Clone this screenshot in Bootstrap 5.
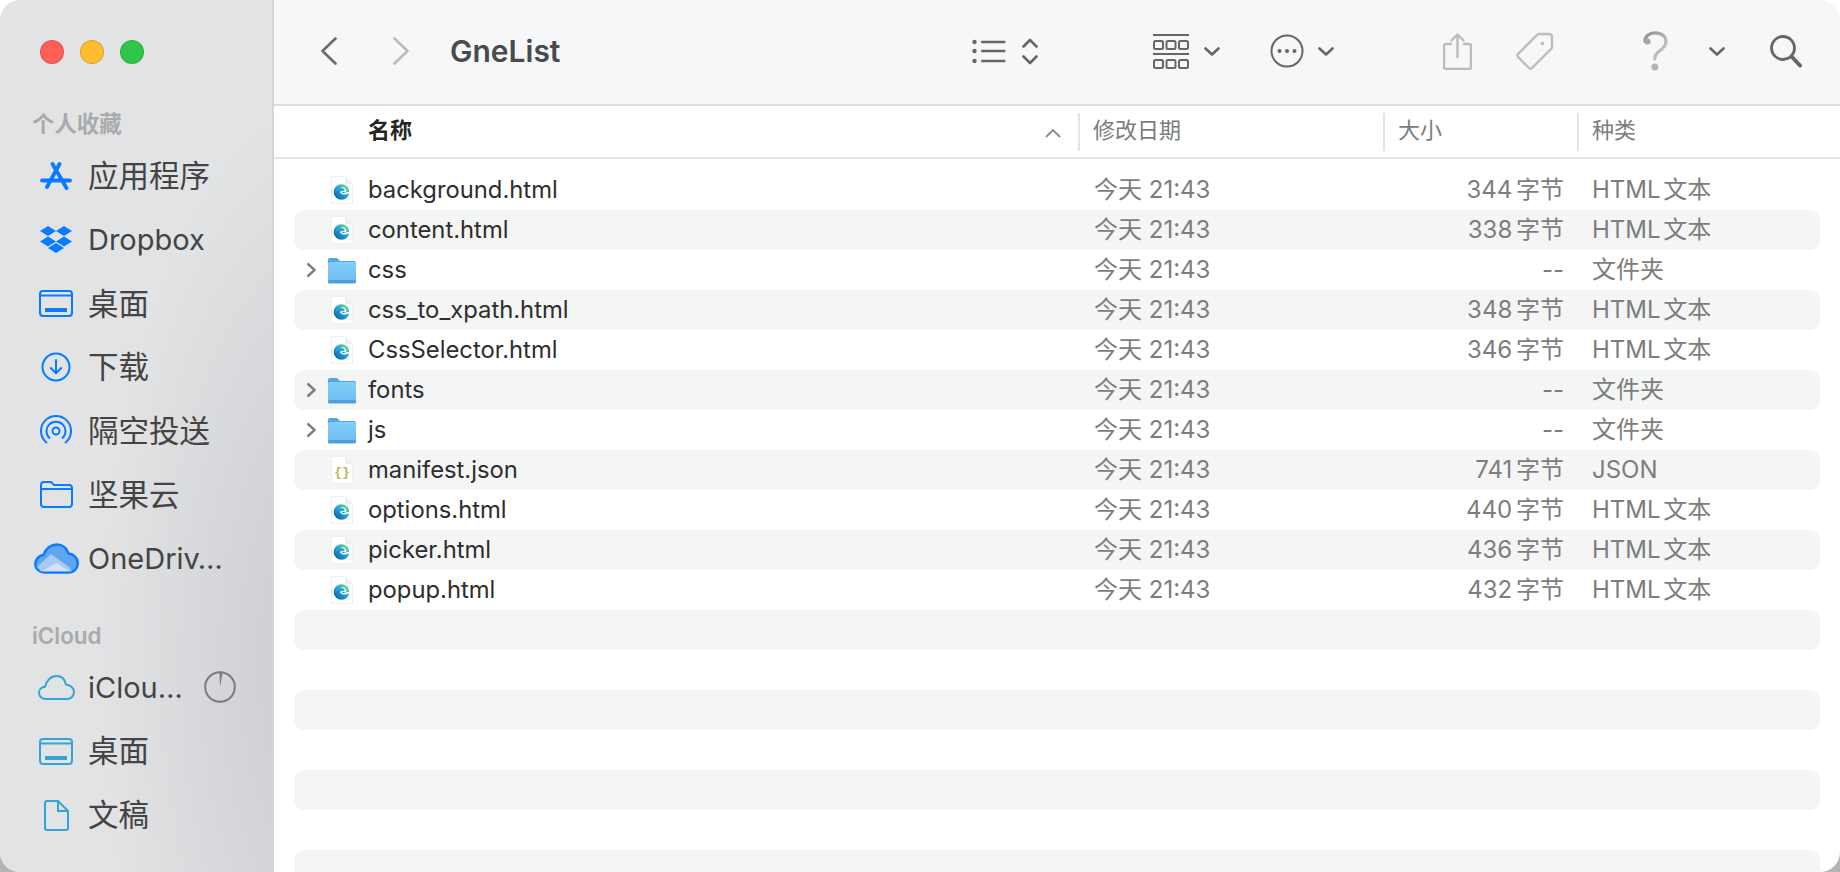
<!DOCTYPE html>
<html lang="zh">
<head>
<meta charset="utf-8">
<title>GneList</title>
<link href="https://cdn.jsdelivr.net/npm/bootstrap@5.3.0/dist/css/bootstrap.min.css" rel="stylesheet">
<style>
html,body{height:100%;overflow:hidden}
body{background:linear-gradient(#fff 0 60px,#b4b4b4 60px);font-family:Inter,"Noto Sans CJK SC",sans-serif}
.win{height:872px;border-radius:20px;overflow:hidden;background:#fff}
.side{width:274px;flex:none;border-right:2px solid #d3d4d6;background:radial-gradient(ellipse 230px 560px at 330px 660px,#c8cacd 0,rgba(200,202,205,.5) 50%,rgba(226,227,229,0) 100%),#e2e3e5}
.lights{padding:40px 0 0 40px;gap:16px}
.light{width:24px;height:24px;border-radius:50%;border:1px solid rgba(0,0,0,.12)}
.l-r{background:#fe5f57}.l-y{background:#febc2e}.l-g{background:#30c748}
.sec{font-size:22.4px;font-weight:600;line-height:28px;color:#a9aaac;padding-left:32px;margin-bottom:6px}
.sec-a{margin-top:46px}.sec-b{margin-top:31px}
.it{height:63.8px;font-size:29px;color:#444;white-space:nowrap}
.cj{font-size:30.5px}
.ic{width:56px;margin:0 4px 0 28px;flex:none;display:flex;justify-content:center}
.tint-a{color:#0a7aff}.tint-b{color:#34a4d6}
.pie{margin-left:21px}
.bar{height:106px;background:#f6f7f9;border-bottom:2px solid #dcdcdc;padding:0 0 2px 47px;color:#666}
.ttl{font-size:30px;font-weight:600;color:#4a4a4a;margin:0 0 0 41px;line-height:1}
.hd{height:53px;border-bottom:2px solid #e4e4e4;font-size:22px;color:#7c7c7c}
.hc{height:38px;border-left:2px solid #e4e4e4;padding-left:13px;line-height:34px}
.hc-n{width:804px;padding-left:94px;border-left:0;color:#262626;font-weight:600;position:relative}
.hc-d{width:305px}.hc-s{width:194px}
.sort{position:absolute;right:17px;top:15px}
.rows{padding:11px 20px 0;overflow:hidden;flex:1}
.rw{height:40px;border-radius:10px;display:grid;grid-template-columns:74px 726px 290px 180px 28px 1fr;align-items:center;font-size:24px;color:#7d7d7d;white-space:nowrap}
.rw:nth-child(even){background:#f4f5f5}
.nm{color:#2e2e2e;font-size:23.800px}
.sz{text-align:right;word-spacing:-3px}
.ty{grid-column:6;word-spacing:-4px}
.lead-ic{display:flex;align-items:center;padding-left:12px;height:40px}
.tw{width:28px;flex:none;display:flex;justify-content:center}
.tri{width:22px;flex:none;display:flex}
.tb-fw{margin-left:56px}
.tb-list{margin-left:412px}
.tb-ud{margin-left:16px}
.tb-grid{margin-left:115px}
.tb-c1{margin-left:15px}
.tb-more{margin-left:50px}
.tb-c2{margin-left:14px}
.tb-share{margin-left:109px}
.tb-tag{margin-left:44px}
.tb-q{margin-left:88px}
.tb-c3{margin-left:41px}
.tb-s{margin-left:45px}
</style>
</head>
<body>
<svg width="0" height="0" class="d-block" aria-hidden="true">
<defs>
<linearGradient id="eg" x1="0" y1="1" x2="1" y2="0"><stop offset="0" stop-color="#0b4f9c"/><stop offset=".5" stop-color="#1f9fd6"/><stop offset=".85" stop-color="#5fd98a"/><stop offset="1" stop-color="#7fe060"/></linearGradient>
<linearGradient id="fg" x1="0" y1="0" x2="0" y2="1"><stop offset="0" stop-color="#84cef8"/><stop offset="1" stop-color="#6abcf1"/></linearGradient>
<linearGradient id="qg" x1="0" y1="0" x2="1" y2="1"><stop offset="0" stop-color="#8f8f8f"/><stop offset="1" stop-color="#cfcfcf"/></linearGradient>
<symbol id="page" viewBox="0 0 22 28"><path d="M.5.5H14L21.5 8V27.5H.5Z" fill="#fff" stroke="#efefef"/><path d="M14 .5V8H21.5Z" fill="#f0f0f0"/></symbol>
<symbol id="edge" viewBox="0 0 22 28"><use href="#page" width="22" height="28"/><circle cx="10.5" cy="16" r="7.800" fill="url(#eg)"/><path d="M5.200 15.500C6.200 11.500 11 10.200 13.400 13.200 14 14 13.800 15 12.800 15.200H9.200C8.600 17.400 11.600 19.400 16 17.900L18.300 17.200 18.500 15.800C18 15.600 14 17 12.400 17 10.600 17 10.400 16.400 11 16H15.200C16 13 13 10.600 10 11.200 7 11.800 5.200 13.400 5.200 15.500Z" fill="#fff"/></symbol>
<symbol id="json" viewBox="0 0 22 28"><use href="#page" width="22" height="28"/><text x="11" y="20" text-anchor="middle" font-family="Liberation Mono,monospace" font-size="13" font-weight="700" fill="#b9b64c">{}</text></symbol>
<symbol id="folder" viewBox="0 0 28 27"><path d="M0 3a2 2 0 0 1 2-2h7l3 3h14a2 2 0 0 1 2 2v5H0Z" fill="#4ea6e8"/><rect y="5" width="28" height="21" rx="2" fill="url(#fg)"/><rect y="23" width="28" height="3.500" rx="1.500" fill="#4f9fdc"/></symbol>
<symbol id="tri" viewBox="0 0 10 16"><path d="M1.500 1.500 8.500 8 1.500 14.500" fill="none" stroke="#7d7d7d" stroke-width="2.400"/></symbol>
<symbol id="chev" viewBox="0 0 16 9"><path d="M1.500 1.500 8 7.500 14.500 1.500" fill="none" stroke="#666" stroke-width="2.600" stroke-linecap="round" stroke-linejoin="round"/></symbol>
<symbol id="desk" viewBox="0 0 34 27"><rect x="1" y="1" width="32" height="25" rx="3" fill="none" stroke="currentColor" stroke-width="2"/><path d="M1 5.500H33" stroke="currentColor" stroke-width="2"/><rect x="6" y="18" width="22" height="4" fill="currentColor"/></symbol>
</defs>
</svg>

<div class="win d-flex">
<aside class="side d-flex flex-column">
  <div class="lights d-flex"><span class="light l-r"></span><span class="light l-y"></span><span class="light l-g"></span></div>
  <div class="sec sec-a">个人收藏</div>
  <div class="it d-flex align-items-center"><span class="ic"><svg width="32" height="28" viewBox="0 0 32 28" fill="none" stroke="#0a7aff" stroke-width="3.800" stroke-linecap="round"><path d="M19.500 2 7 25M12.500 2 26.500 26M2 18.500H30"/></svg></span><span class="cj">应用程序</span></div>
  <div class="it d-flex align-items-center"><span class="ic"><svg width="32" height="27" viewBox="0 0 32 27" fill="#0a7aff"><path d="M8 0l8 5-8 5-8-5zM24 0l8 5-8 5-8-5zM8 10.500l8 5-8 5-8-5zM24 10.500l8 5-8 5-8-5zM16 17l8 5-8 5-8-5z"/></svg></span>Dropbox</div>
  <div class="it d-flex align-items-center"><span class="ic tint-a"><svg width="34" height="27"><use href="#desk"/></svg></span><span class="cj">桌面</span></div>
  <div class="it d-flex align-items-center"><span class="ic"><svg width="30" height="30" viewBox="0 0 30 30" fill="none" stroke="#0a7aff" stroke-width="2"><circle cx="15" cy="15" r="13.500"/><path d="M15 8V21M9.800 16 15 21.200 20.200 16" stroke-linecap="round" stroke-linejoin="round"/></svg></span><span class="cj">下载</span></div>
  <div class="it d-flex align-items-center"><span class="ic"><svg width="32" height="32" viewBox="0 0 32 32" fill="none" stroke="#0a7aff" stroke-width="2"><path d="M7 28A15 15 0 1 1 25 28M10 23.500A9.500 9.500 0 1 1 22 23.500"/><circle cx="16" cy="16" r="3.500"/></svg></span><span class="cj">隔空投送</span></div>
  <div class="it d-flex align-items-center"><span class="ic"><svg width="33" height="27" viewBox="0 0 33 27" fill="none" stroke="#0a7aff" stroke-width="2"><path d="M1 4a3 3 0 0 1 3-3h7l3 3h15a3 3 0 0 1 3 3v16a3 3 0 0 1-3 3H4a3 3 0 0 1-3-3ZM1 8H32"/></svg></span><span class="cj">坚果云</span></div>
  <div class="it d-flex align-items-center"><span class="ic"><svg width="45" height="31" viewBox="0 0 45 31"><path d="M11 29.500C5 29.500 1.200 25.500 1.200 21 1.200 16 5 12.500 9.500 12 11.500 5.500 17 1.500 23 1.500 28.500 1.500 33 5 34.500 10.500 39.500 11 43.800 15 43.800 20.500 43.800 25.500 40 29.500 34.500 29.500Z" fill="#5fa5f2" stroke="#0a7aff" stroke-width="2.400"/><path d="M3 24 17 11 35 24 38 28.300H7Z" fill="#a9c9f2"/><path d="M8 28.300 22 20 36 28.300Z" fill="#d3e2f6"/></svg></span>OneDriv…</div>
  <div class="sec sec-b">iCloud</div>
  <div class="it d-flex align-items-center"><span class="ic"><svg width="37" height="25" viewBox="0 0 37 25" fill="none" stroke="#34a4d6" stroke-width="2"><path d="M8 24C4 24 1 21.200 1 17.800 1 14.500 3.500 12 7 11.800 8.500 5.500 13 1 18.500 1 23.500 1 27 4.500 28 9.500 32.500 10 36 13 36 17 36 21 33 24 29 24Z"/></svg></span>iClou…<svg class="pie" width="32" height="32" viewBox="0 0 32 32" fill="none"><circle cx="16" cy="16" r="14.800" stroke="#7b7b7b" stroke-width="2"/><path d="M15.500 2 18.500 2.200 16 16Z" fill="#7b7b7b"/></svg></div>
  <div class="it d-flex align-items-center"><span class="ic tint-b"><svg width="34" height="27"><use href="#desk"/></svg></span><span class="cj">桌面</span></div>
  <div class="it d-flex align-items-center"><span class="ic"><svg width="25" height="31" viewBox="0 0 25 31" fill="none" stroke="#34a4d6" stroke-width="2"><path d="M1 3a2 2 0 0 1 2-2h11l10 10v17a2 2 0 0 1-2 2H3a2 2 0 0 1-2-2ZM14 1v10h10"/></svg></span><span class="cj">文稿</span></div>
</aside>

<main class="flex-grow-1 d-flex flex-column">
  <header class="bar d-flex align-items-center">
    <svg width="16" height="28" viewBox="0 0 16 28" fill="none" stroke="#6b6b6b" stroke-width="2.600" stroke-linecap="round" stroke-linejoin="round"><path d="M14.500 1.500 1.500 14 14.500 26.500"/></svg>
    <svg class="tb-fw" width="16" height="28" viewBox="0 0 16 28" fill="none" stroke="#bbb" stroke-width="2.600" stroke-linecap="round" stroke-linejoin="round"><path d="M1.500 1.500 14.500 14 1.500 26.500"/></svg>
    <h1 class="ttl">GneList</h1>
    <svg class="tb-list" width="34" height="24" viewBox="0 0 34 24" fill="#666"><circle cx="2.500" cy="3" r="2.200"/><circle cx="2.500" cy="12" r="2.200"/><circle cx="2.500" cy="22" r="2.200"/><rect x="9" y="1.700" width="24.500" height="2.600" rx="1"/><rect x="9" y="10.700" width="24.500" height="2.600" rx="1"/><rect x="9" y="20.700" width="24.500" height="2.600" rx="1"/></svg>
    <svg class="tb-ud" width="16" height="27" viewBox="0 0 16 27" fill="none" stroke="#666" stroke-width="2.600" stroke-linecap="round" stroke-linejoin="round"><path d="M1.500 8.500 8 2 14.500 8.500M1.500 18.500 8 25 14.500 18.500"/></svg>
    <svg class="tb-grid" width="36" height="35" viewBox="0 0 36 35" fill="none" stroke="#666" stroke-width="2"><path d="M0 1H36M0 20H36" stroke-width="2.200"/><rect x="1" y="7" width="9" height="8" rx="1.500"/><rect x="13.500" y="7" width="9" height="8" rx="1.500"/><rect x="26" y="7" width="9" height="8" rx="1.500"/><rect x="1" y="26" width="9" height="8" rx="1.500"/><rect x="13.500" y="26" width="9" height="8" rx="1.500"/><rect x="26" y="26" width="9" height="8" rx="1.500"/></svg>
    <svg class="tb-c1" width="16" height="9"><use href="#chev"/></svg>
    <svg class="tb-more" width="34" height="34" viewBox="0 0 34 34" fill="none" stroke="#666" stroke-width="2"><circle cx="17" cy="17" r="15.500"/><g fill="#666" stroke="none"><circle cx="9.500" cy="17" r="2"/><circle cx="17" cy="17" r="2"/><circle cx="24.500" cy="17" r="2"/></g></svg>
    <svg class="tb-c2" width="16" height="9"><use href="#chev"/></svg>
    <svg class="tb-share" width="29" height="37" viewBox="0 0 29 37" fill="none" stroke="#bcbcbc" stroke-width="2.400" stroke-linecap="round" stroke-linejoin="round"><path d="M8 11H3a2 2 0 0 0-2 2V34a2 2 0 0 0 2 2H26a2 2 0 0 0 2-2V13a2 2 0 0 0-2-2H21M14.500 24V2M8.500 7.500 14.500 1.500 20.500 7.500"/></svg>
    <svg class="tb-tag" width="38" height="38" viewBox="0 0 38 38" fill="none" stroke="#bcbcbc" stroke-width="2.400" stroke-linejoin="round"><path d="M2 22 21 3a3 3 0 0 1 2-1H33a3 3 0 0 1 3 3V15a3 3 0 0 1-1 2L16 36a2 2 0 0 1-3 0L2 25a2 2 0 0 1 0-3Z"/><circle cx="26.500" cy="11.500" r="1.800" fill="#bcbcbc" stroke="none"/></svg>
    <svg class="tb-q" width="26" height="40" viewBox="0 0 26 40" fill="none"><path d="M3 10.500C2.500 5.500 7.500 1.800 13 1.800 19.500 1.800 24 5.500 24 10.500 24 15 21 17.500 17.500 20 14.500 22 12.800 24 12.800 28" stroke="url(#qg)" stroke-width="3.200" stroke-linecap="round"/><circle cx="5.500" cy="10.500" r="3" fill="#a6a6a6"/><circle cx="12.800" cy="36" r="3.500" fill="#b5b5b5"/></svg>
    <svg class="tb-c3" width="16" height="9"><use href="#chev"/></svg>
    <svg class="tb-s" width="32" height="33" viewBox="0 0 32 33" fill="none" stroke="#666"><circle cx="13" cy="13" r="11.500" stroke-width="2.800"/><path d="M21.500 21.500 30 30.500" stroke-width="4" stroke-linecap="round"/></svg>
  </header>
  <div class="hd d-flex align-items-center">
    <div class="hc hc-n">名称<svg class="sort" width="16" height="10" viewBox="0 0 16 10" fill="none" stroke="#8a8a8a" stroke-width="1.800"><path d="M1 9 8 2 15 9"/></svg></div>
    <div class="hc hc-d">修改日期</div>
    <div class="hc hc-s">大小</div>
    <div class="hc">种类</div>
  </div>
  <div class="rows">
    <div class="rw"><span class="lead-ic"><span class="tri"></span><span class="tw"><svg width="22" height="28"><use href="#edge"/></svg></span></span><span class="nm">background.html</span><span>今天 21:43</span><span class="sz">344 字节</span><span class="ty">HTML 文本</span></div>
    <div class="rw"><span class="lead-ic"><span class="tri"></span><span class="tw"><svg width="22" height="28"><use href="#edge"/></svg></span></span><span class="nm">content.html</span><span>今天 21:43</span><span class="sz">338 字节</span><span class="ty">HTML 文本</span></div>
    <div class="rw"><span class="lead-ic"><span class="tri"><svg width="10" height="16"><use href="#tri"/></svg></span><span class="tw"><svg width="28" height="27"><use href="#folder"/></svg></span></span><span class="nm">css</span><span>今天 21:43</span><span class="sz">--</span><span class="ty">文件夹</span></div>
    <div class="rw"><span class="lead-ic"><span class="tri"></span><span class="tw"><svg width="22" height="28"><use href="#edge"/></svg></span></span><span class="nm">css_to_xpath.html</span><span>今天 21:43</span><span class="sz">348 字节</span><span class="ty">HTML 文本</span></div>
    <div class="rw"><span class="lead-ic"><span class="tri"></span><span class="tw"><svg width="22" height="28"><use href="#edge"/></svg></span></span><span class="nm">CssSelector.html</span><span>今天 21:43</span><span class="sz">346 字节</span><span class="ty">HTML 文本</span></div>
    <div class="rw"><span class="lead-ic"><span class="tri"><svg width="10" height="16"><use href="#tri"/></svg></span><span class="tw"><svg width="28" height="27"><use href="#folder"/></svg></span></span><span class="nm">fonts</span><span>今天 21:43</span><span class="sz">--</span><span class="ty">文件夹</span></div>
    <div class="rw"><span class="lead-ic"><span class="tri"><svg width="10" height="16"><use href="#tri"/></svg></span><span class="tw"><svg width="28" height="27"><use href="#folder"/></svg></span></span><span class="nm">js</span><span>今天 21:43</span><span class="sz">--</span><span class="ty">文件夹</span></div>
    <div class="rw"><span class="lead-ic"><span class="tri"></span><span class="tw"><svg width="22" height="28"><use href="#json"/></svg></span></span><span class="nm">manifest.json</span><span>今天 21:43</span><span class="sz">741 字节</span><span class="ty">JSON</span></div>
    <div class="rw"><span class="lead-ic"><span class="tri"></span><span class="tw"><svg width="22" height="28"><use href="#edge"/></svg></span></span><span class="nm">options.html</span><span>今天 21:43</span><span class="sz">440 字节</span><span class="ty">HTML 文本</span></div>
    <div class="rw"><span class="lead-ic"><span class="tri"></span><span class="tw"><svg width="22" height="28"><use href="#edge"/></svg></span></span><span class="nm">picker.html</span><span>今天 21:43</span><span class="sz">436 字节</span><span class="ty">HTML 文本</span></div>
    <div class="rw"><span class="lead-ic"><span class="tri"></span><span class="tw"><svg width="22" height="28"><use href="#edge"/></svg></span></span><span class="nm">popup.html</span><span>今天 21:43</span><span class="sz">432 字节</span><span class="ty">HTML 文本</span></div>
    <div class="rw"></div><div class="rw"></div><div class="rw"></div><div class="rw"></div><div class="rw"></div><div class="rw"></div><div class="rw"></div>
  </div>
</main>
</div>
<script src="https://cdn.jsdelivr.net/npm/bootstrap@5.3.0/dist/js/bootstrap.bundle.min.js"></script>
</body>
</html>
